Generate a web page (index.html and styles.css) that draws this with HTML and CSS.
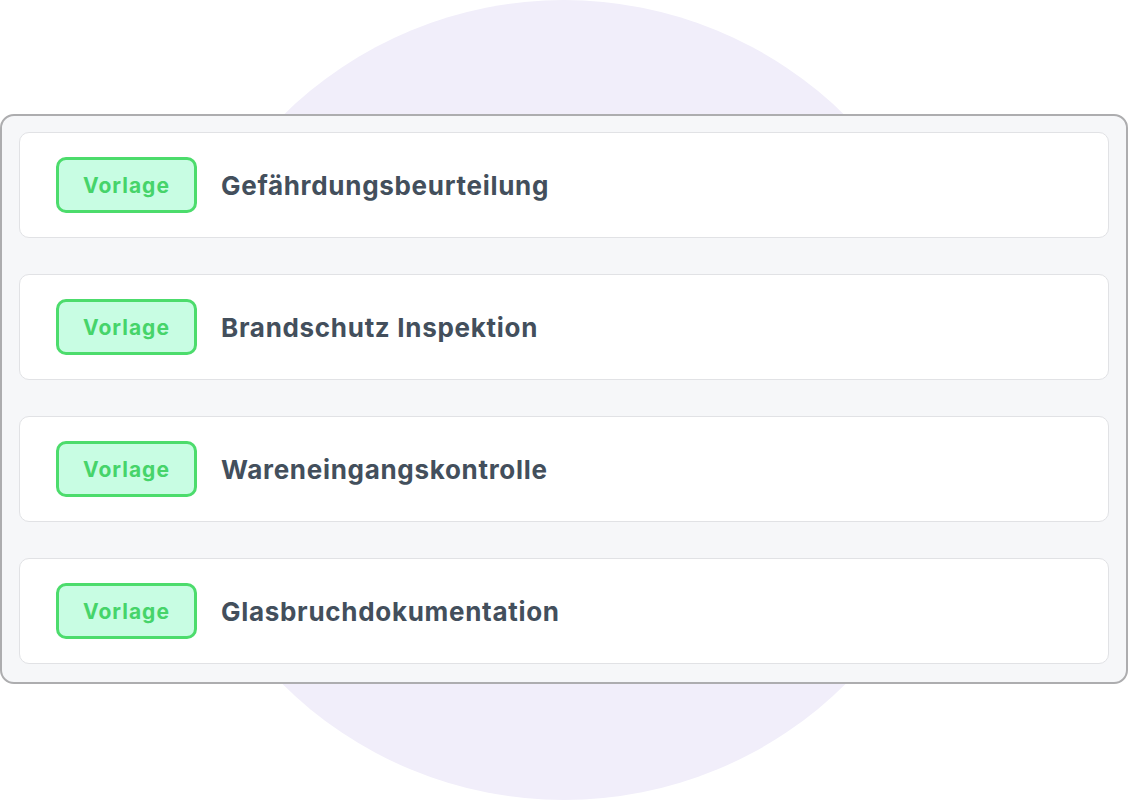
FILE: index.html
```html
<!DOCTYPE html>
<html lang="de">
<head>
<meta charset="utf-8">
<title>Vorlagen</title>
<link rel="stylesheet" href="styles.css">
</head>
<body>
<div class="stage">
  <div class="blob"></div>
  <div class="panel">
    <div class="card"><span class="badge">Vorlage</span><span class="title">Gefährdungsbeurteilung</span></div>
    <div class="card"><span class="badge">Vorlage</span><span class="title">Brandschutz Inspektion</span></div>
    <div class="card"><span class="badge">Vorlage</span><span class="title">Wareneingangskontrolle</span></div>
    <div class="card"><span class="badge">Vorlage</span><span class="title">Glasbruchdokumentation</span></div>
  </div>
</div>
</body>
</html>
```
FILE: styles.css
```css
html, body {
  margin: 0;
  padding: 0;
  background: #ffffff;
}
.stage {
  position: relative;
  width: 1128px;
  height: 800px;
  overflow: hidden;
  padding-top: 114px;
  box-sizing: border-box;
  font-family: Inter, "Noto Sans", sans-serif;
}
.blob {
  position: absolute;
  left: 164px;
  top: 0;
  width: 800px;
  height: 800px;
  border-radius: 50%;
  background: #f1eefa;
}
.panel {
  position: relative;
  width: 1128px;
  box-sizing: border-box;
  border: 2px solid #adadaf;
  border-radius: 14px;
  background: #f6f7f9;
  padding: 16px 17px 18px 17px;
  display: flex;
  flex-direction: column;
  gap: 36px;
}
.card {
  height: 106px;
  box-sizing: border-box;
  background: #ffffff;
  border: 1px solid #e1e2e5;
  border-radius: 10px;
  display: flex;
  align-items: center;
  padding-left: 36px;
  gap: 24px;
}
.badge {
  width: 141px;
  height: 56px;
  box-sizing: border-box;
  border: 3px solid #4cdc6c;
  border-radius: 10px;
  background: #c8fde3;
  color: #46d46a;
  font-weight: 700;
  font-size: 21px;
  letter-spacing: 1px;
  display: flex;
  align-items: center;
  justify-content: center;
  padding-top: 1px;
}
.title {
  color: #434f5c;
  font-weight: 700;
  font-size: 26px;
  letter-spacing: 0.7px;
}
```
